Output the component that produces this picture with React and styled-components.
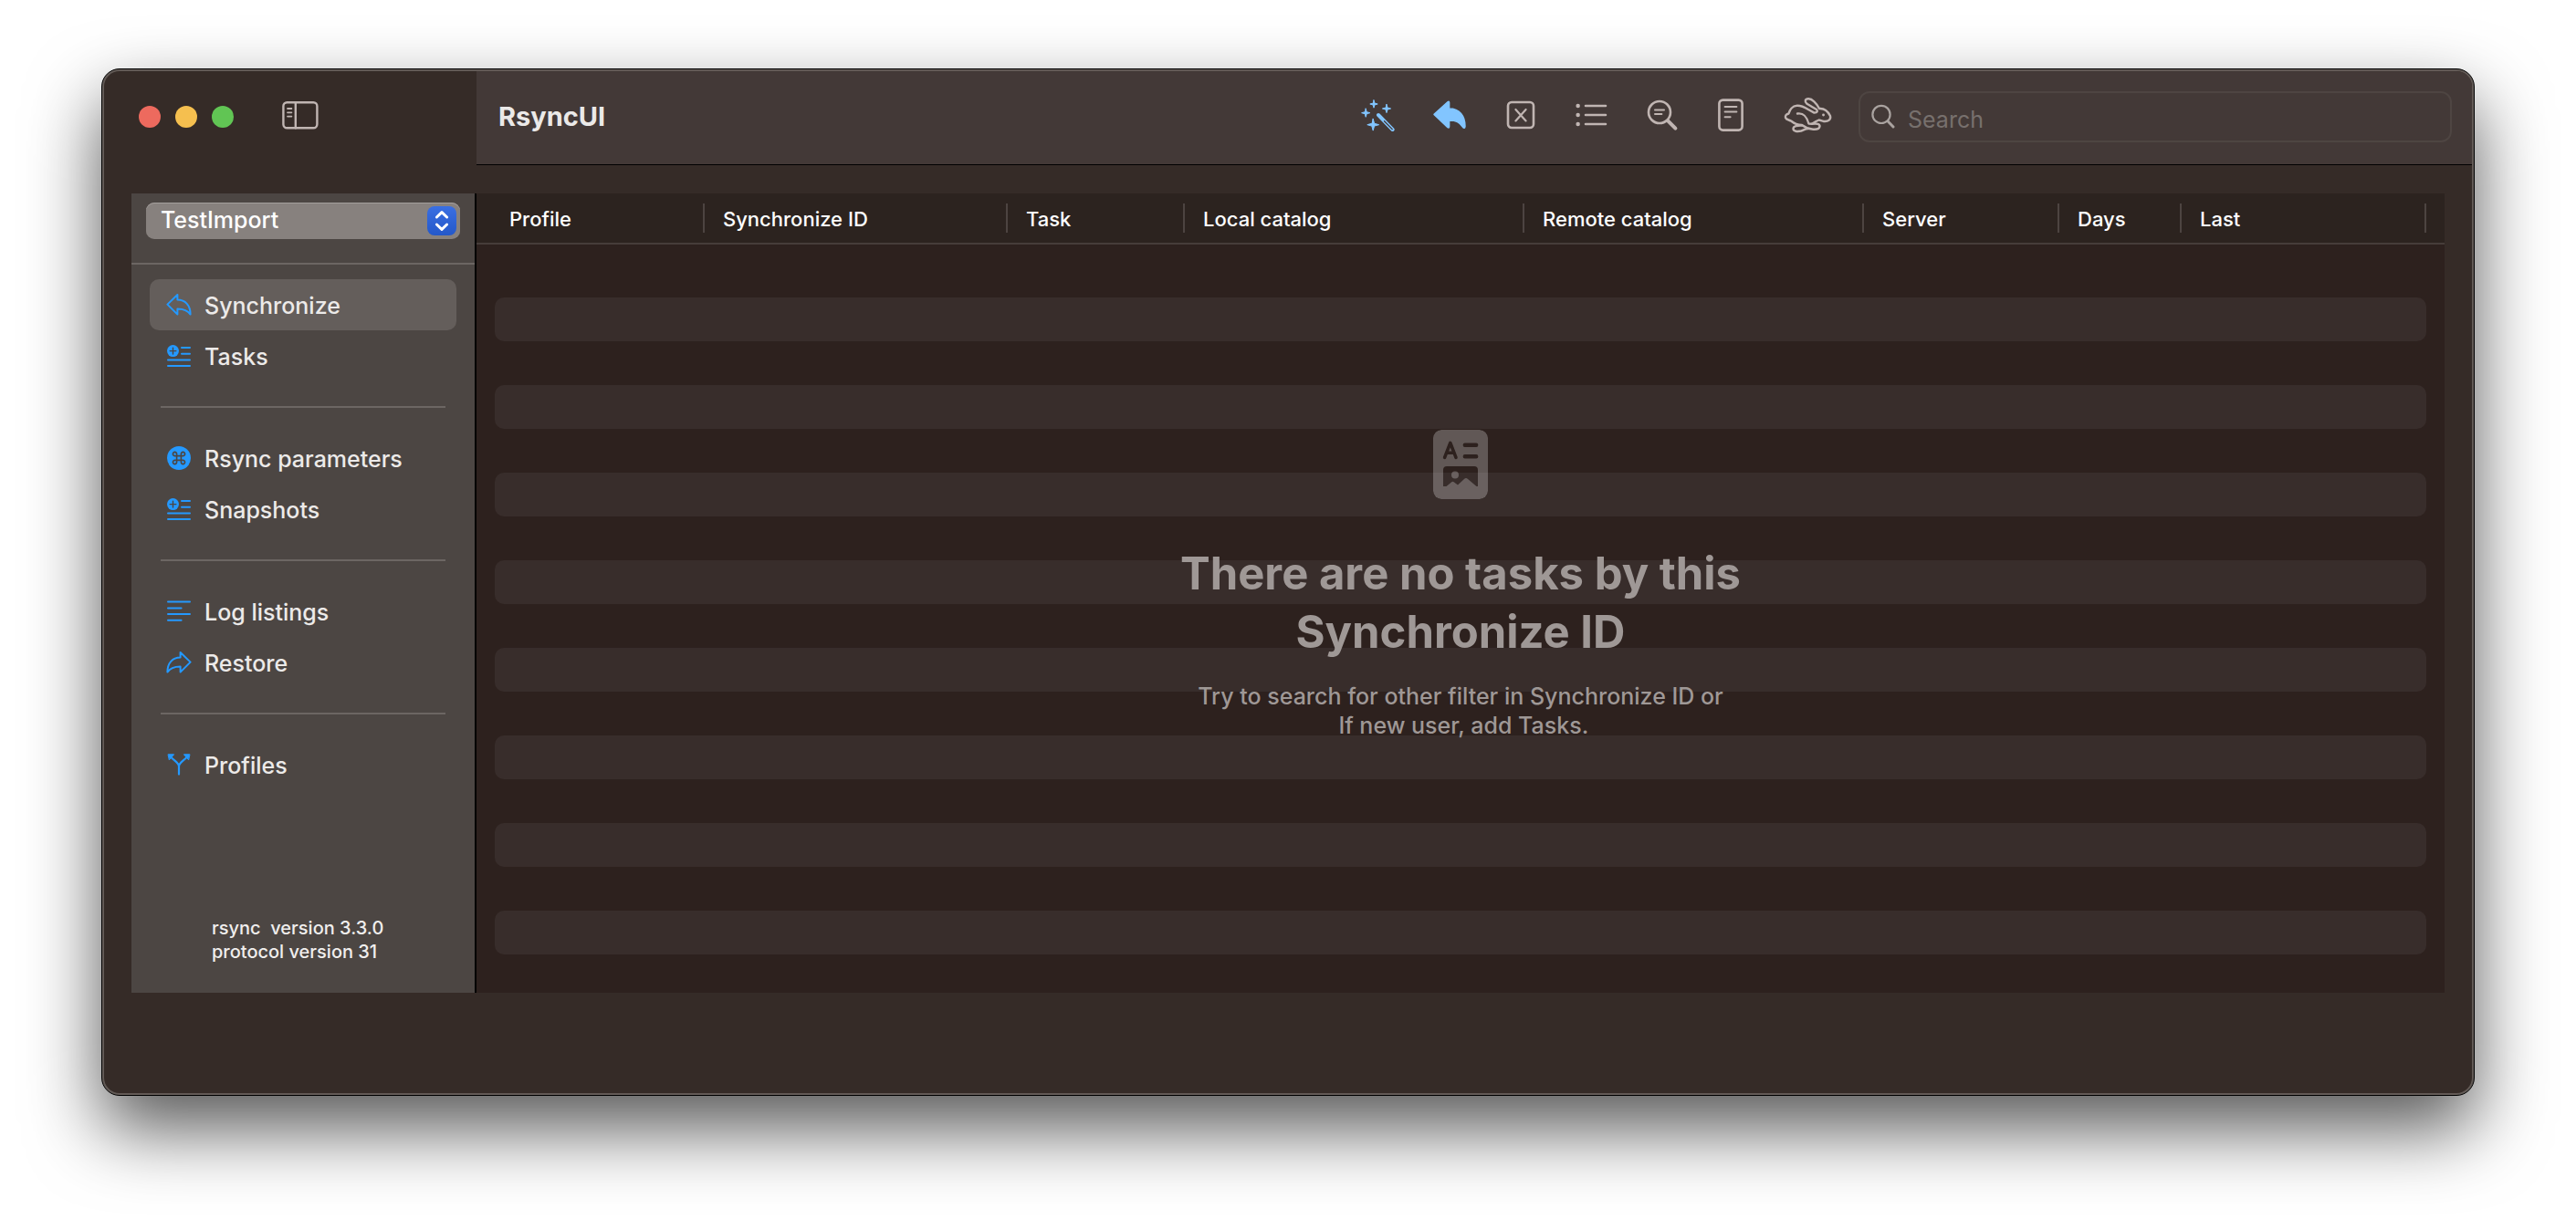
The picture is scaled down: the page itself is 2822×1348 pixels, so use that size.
import React, { useState } from "react";
import styled, { createGlobalStyle } from "styled-components";

const c = {
  window: "#352b27",
  toolbar: "#433937",
  sidebar: "#4c4643",
  tableHead: "#2c231f",
  tableBody: "#2d211e",
  stripe: "#382d2b",
  line: "#463d3a",
  sideLine: "#6c6663",
  blue: "#2499ff",
  lightBlue: "#82c5ff",
  glyph: "#c0b5b2",
};

const GlobalStyle = createGlobalStyle`
  *, *::before, *::after { box-sizing: border-box; }
  body {
    margin: 0;
    background: #fff;
    font-family: Inter, "Liberation Sans", sans-serif;
  }
`;

const Stage = styled.div`
  display: flex;
  min-height: 100vh;
  padding: 75px 111px 147px;
`;

const Window = styled.div`
  flex: 1;
  min-width: 0;
  display: flex;
  flex-direction: column;
  border: 1px solid #000;
  border-radius: 20px;
  background: #625a56;
  padding: 2px;
  box-shadow: 0 36px 80px rgba(0, 0, 0, 0.66);
`;

const WindowFill = styled.div`
  flex: 1;
  display: flex;
  flex-direction: column;
  overflow: hidden;
  border-radius: 17px;
  background: ${c.window};
`;

const TopBar = styled.header`
  display: flex;
  height: 103px;
`;

const TitleSide = styled.div`
  display: flex;
  align-items: center;
  gap: 16px;
  width: 408px;
  padding: 0 0 4px 38px;
`;

const Light = styled.button`
  width: 24px;
  height: 24px;
  padding: 0;
  border: 0;
  border-radius: 50%;
  background: ${(p) => p.$color};
`;

const IconButton = styled.button`
  display: flex;
  padding: 0;
  border: 0;
  background: none;
  color: ${(p) => p.$color || c.glyph};
  svg { overflow: visible; }
`;

const ToggleSlot = styled.div`
  padding: 0 0 4px 37px;
`;

const Toolbar = styled.div`
  flex: 1;
  display: flex;
  align-items: center;
  padding: 0 22px 2px 24px;
  border-bottom: 1px solid #000;
  background: ${c.toolbar};
`;

const Title = styled.h1`
  flex: 1;
  margin: 0;
  color: #ebe9e8;
  font-size: 29px;
  line-height: 36px;
  font-weight: 700;
`;

const Tools = styled.div`
  display: flex;
  align-items: center;
  gap: 44px;
  margin-right: 28px;
  padding-bottom: 4px;
`;

const SearchBox = styled.label`
  display: flex;
  align-items: center;
  gap: 14px;
  width: 650px;
  height: 56px;
  padding: 0 12px;
  border: 2px solid #4e4542;
  border-radius: 12px;
  color: #aaa3a0;
`;

const SearchInput = styled.input`
  flex: 1;
  min-width: 0;
  padding: 6px 0 0;
  border: 0;
  outline: 0;
  background: none;
  color: #ebe9e8;
  font: 400 25px/32px Inter, "Liberation Sans", sans-serif;
  &::placeholder { color: #77706d; opacity: 1; }
`;

const Body = styled.div`
  flex: 1;
  display: flex;
  padding: 31px 30px 110px;
`;

const Sidebar = styled.aside`
  display: flex;
  flex-direction: column;
  width: 378px;
  border-right: 2px solid #000;
  background: ${c.sidebar};
`;

const PickerRow = styled.div`
  padding: 10px 16px 26px;
  border-bottom: 2px solid ${c.sideLine};
`;

const Picker = styled.div`
  position: relative;
`;

const Select = styled.select`
  display: block;
  width: 100%;
  height: 40px;
  padding: 0 44px 2px 16px;
  appearance: none;
  border: 0;
  border-radius: 9px;
  background: #87817e;
  box-shadow: inset 0 1px 0 #a39e9b;
  color: #fff;
  font: 500 25px/32px Inter, "Liberation Sans", sans-serif;
`;

const PickerBadge = styled.span`
  position: absolute;
  top: 4px;
  right: 4px;
  display: flex;
  align-items: center;
  justify-content: center;
  width: 32px;
  height: 32px;
  border-radius: 8px;
  background: linear-gradient(#3a6fe2, #2458c9);
  color: #fff;
  pointer-events: none;
`;

const Nav = styled.nav`
  flex: 1;
  padding: 16px 20px;
`;

const NavItem = styled.a`
  display: flex;
  align-items: center;
  gap: 14px;
  height: 56px;
  padding: 0 18px;
  border-radius: 10px;
  background: ${(p) => (p.$active ? "#645e5b" : "transparent")};
  color: #eceae9;
  font-size: 25px;
  line-height: 32px;
  font-weight: 500;
  text-decoration: none;
  svg { flex: none; color: ${c.blue}; }
`;

const NavLabel = styled.span`
  padding-top: 2px;
`;

const NavDivider = styled.hr`
  height: 2px;
  margin: 27px 12px;
  border: 0;
  background: ${c.sideLine};
`;

const Version = styled.p`
  margin: 0;
  padding: 0 0 32px 88px;
  color: #f0eeed;
  font-size: 20px;
  line-height: 26px;
  font-weight: 500;
  white-space: pre-wrap;
`;

const Main = styled.main`
  position: relative;
  flex: 1;
  min-width: 0;
  overflow: hidden;
  background: ${c.tableBody};
`;

const Table = styled.table`
  width: 100%;
  table-layout: fixed;
  border-collapse: separate;
  border-spacing: 0;
  tbody::before { content: ""; display: block; height: 10px; }
`;

const Th = styled.th`
  height: 56px;
  padding: 0;
  border-bottom: 2px solid ${c.line};
  background: ${c.tableHead};
  text-align: left;
`;

const ThLabel = styled.div`
  height: 32px;
  margin-right: ${(p) => (p.$last ? 20 : 0)}px;
  padding-left: ${(p) => (p.$first ? 36 : 20)}px;
  border-right: 2px solid #4d4441;
  color: #fff;
  font-size: 22px;
  line-height: 34px;
  font-weight: 500;
  white-space: nowrap;
`;

const StripeCell = styled.td`
  padding: 0 20px;
`;

const Stripe = styled.div`
  height: 48px;
  border-radius: 10px;
  background: ${(p) => (p.$on ? c.stripe : "transparent")};
`;

const Empty = styled.div`
  position: absolute;
  inset: 0;
  display: flex;
  flex-direction: column;
  align-items: center;
  justify-content: center;
  padding-bottom: 18px;
  color: #9f9896;
  text-align: center;
`;

const EmptyTitle = styled.h2`
  margin: 50px 0 22px;
  width: 660px;
  font-size: 49px;
  line-height: 64px;
  font-weight: 700;
`;

const EmptyText = styled.p`
  margin: 0;
  font-size: 25px;
  line-height: 32px;
  font-weight: 500;
  white-space: pre-line;
`;

const Line = ({ w, h, sw = 2, children }) => (
  <svg width={w} height={h} viewBox={`0 0 ${w} ${h}`} fill="none" stroke="currentColor"
    strokeWidth={sw} strokeLinecap="round" strokeLinejoin="round" aria-hidden="true">
    {children}
  </svg>
);

const star = (x, y, r) => {
  const k = r * 0.22;
  return `M${x} ${y - r}L${x + k} ${y - k}L${x + r} ${y}L${x + k} ${y + k}L${x} ${y + r}L${x - k} ${y + k}L${x - r} ${y}L${x - k} ${y - k}Z`;
};

const SidebarIcon = () => (
  <Line w={40} h={32} sw={2.4}>
    <rect x="1.4" y="2.2" width="37" height="28" rx="4" />
    <path d="M14.8 2.2V30.2" />
    <path strokeWidth="1.8" d="M6 9H10.4M6 13.3H10.4M6 17.6H10.4" />
  </Line>
);
const Wand = () => (
  <Line w={38} h={36} sw={1}>
    <path fill="currentColor" d={star(17, 6, 4.2) + star(31, 11, 4.6) + star(8.2, 15.7, 4.6) + star(16.2, 28.7, 6.4)} />
    <path strokeWidth="4" d="M22 18L37.6 34" />
    <path stroke={c.toolbar} strokeWidth="1.3" d="M28.5 24.8L37.2 33.6" />
  </Line>
);
const ReplyFill = () => (
  <Line w={36} h={32} sw={1.5}>
    <path fill="currentColor" d="M1 15.4L16.2 1.6Q17.6 .8 17.6 2.6V9C29 9 35 17 35 28.4Q34.6 31.6 32.6 29.4C29 23.6 25 22 17.6 22V28.6Q17.6 30.6 16 29.6Z" />
  </Line>
);
const XSquare = () => (
  <Line w={32} h={32} sw={2.6}>
    <rect x="2" y="2" width="28" height="28" rx="4" />
    <path strokeWidth="2.2" d="M10.4 10L21.6 22.4M21.6 10L10.4 22.4" />
  </Line>
);
const ListIcon = () => (
  <Line w={34} h={28} sw={2.6}>
    <path d="M11 4H33M11 14H33M11 24H33" />
    <path strokeWidth="4.4" d="M2.6 4H2.7M2.6 14H2.7M2.6 24H2.7" />
  </Line>
);
const TextSearch = () => (
  <Line w={34} h={34} sw={2.6}>
    <circle cx="14" cy="14" r="12" />
    <path strokeWidth="4" d="M23.4 23.6L31.4 31.6" />
    <path strokeWidth="2" d="M9 11.6H19M9 16H16.4" />
  </Line>
);
const DocIcon = () => (
  <Line w={28} h={36} sw={2.6}>
    <rect x="1.4" y="1.6" width="25.2" height="33" rx="4" />
    <path strokeWidth="2" d="M7.6 9H20.4M7.6 14.6H20.4M7.6 20.2H13.6" />
  </Line>
);
const Hare = () => (
  <Line w={54} h={40} sw={2.4}>
    <path d="M20 31C16 31 11 29 8 26.5C6 25.5 2.8 25.3 2 23C1.5 20.6 3 19 5.5 18.5C6.5 15 9.5 10 14.5 9.8C18 9.5 22 11 27 14L33.5 17.6C37 17.4 37.5 15.6 36 14L25.5 7.8C22.5 5.2 23.5 2.5 27 2.3C31 2 36 7 39 13C45 12.5 49 17 51 21C52 24.8 49 27.5 44 27C41.5 26.5 40 25.5 38.6 25.5C36 26.5 33.5 28 31 29.8C36 29.2 39.8 29.5 39.5 32.5C39 36 35 36 31 35.5C26 35 24 34 20 31Z" />
    <path d="M15 18.5C21.5 17.5 25 21 27.4 29.5L31 29.8" />
    <path d="M20 31.6C15 31.4 10.5 32 10.5 35C10.5 38 15 38.4 19 37.5C22 36.6 23.5 35 27 35" />
    <path strokeWidth="2.8" d="M43.5 20H43.6" />
  </Line>
);
const SearchIcon = () => (
  <Line w={26} h={28} sw={2.2}>
    <circle cx="11" cy="11.4" r="9.6" />
    <path strokeWidth="3" d="M18 18.8L24 25" />
  </Line>
);
const Chevrons = () => (
  <Line w={16} h={24} sw={3}>
    <path d="M2.4 8L8 2.6L13.6 8M2.4 16L8 21.4L13.6 16" />
  </Line>
);

const ReplyLine = () => (
  <Line w={28} h={26}>
    <path d="M1.4 12.6L12.4 2V7.6C21 7.6 26.6 13.6 26.6 23.6C23.4 18.6 19 17.4 12.4 17.4V23.6Z" />
  </Line>
);
const ForwardLine = () => (
  <Line w={28} h={26}>
    <path d="M26.6 12.6L15.6 2V7.6C7 7.6 1.4 13.6 1.4 23.6C4.6 18.6 9 17.4 15.6 17.4V23.6Z" />
  </Line>
);
const AddList = () => (
  <Line w={28} h={26} sw={2}>
    <circle cx="7.5" cy="7.6" r="6.5" fill="currentColor" stroke="none" />
    <path stroke={c.sidebar} strokeWidth="1.4" d="M7.5 4.2V11M4.1 7.6H10.9" />
    <path d="M17 4H26M17 10.8H26M2 17.4H26M2 24H26" />
  </Line>
);
const CommandDot = () => (
  <Line w={28} h={26} sw={1.6}>
    <circle cx="14" cy="13" r="13" fill="currentColor" stroke="none" />
    <path stroke={c.sidebar} d="M11.6 10.6H16.4V15.4H11.6ZM11.6 10.6H9.8A2.1 2.1 0 1 1 11.6 8.7ZM16.4 10.6V8.7A2.1 2.1 0 1 1 18.2 10.6ZM16.4 15.4H18.2A2.1 2.1 0 1 1 16.4 17.3ZM11.6 15.4V17.3A2.1 2.1 0 1 1 9.8 15.4Z" />
  </Line>
);
const TextLines = () => (
  <Line w={28} h={26}>
    <path d="M2 2.6H26M2 9.4H16.6M2 16H26M2 22.8H16.6" />
  </Line>
);
const Branch = () => (
  <Line w={28} h={26} sw={2.2}>
    <path d="M14 23.6V15C14 10.6 9 9 5 4.6M14 15C14 10.6 19 9 23 4.6" />
    <path strokeWidth="1" fill="currentColor" d="M2.4 1.8H8.6L3.6 7.6ZM25.6 1.8H19.4L24.4 7.6Z" />
  </Line>
);
const EmptyIcon = () => (
  <svg width="60" height="76" viewBox="0 0 60 76" fill="none" strokeLinecap="round" strokeLinejoin="round" aria-hidden="true">
    <mask id="card">
      <rect width="60" height="76" rx="9" fill="#fff" />
      <path stroke="#000" strokeWidth="3.6" d="M12.6 30.4L18.8 14.4L25 30.4M15 25.2H22.6" />
      <path stroke="#000" strokeWidth="4.4" d="M34.8 16.8H47.2M34.8 29.2H47.2" />
      <path fill="#000" d="M11 44Q11 40 15 40H45Q49 40 49 44V62H47.5L38 54Q36 52 34 54L27 60.5L23 57.5Q21.4 56 20 57.5L14.5 62H11Z" />
      <circle cx="24" cy="49.6" r="4" fill="#fff" />
    </mask>
    <rect width="60" height="76" rx="9" fill="rgba(255,255,255,.25)" mask="url(#card)" />
  </svg>
);

const tools = [
  ["Estimate", Wand, c.lightBlue],
  ["Synchronize", ReplyFill, c.lightBlue],
  ["Reset", XSquare],
  ["List tasks", ListIcon],
  ["Estimate details", TextSearch],
  ["Output", DocIcon],
  ["Quick synchronize", Hare],
];

const groups = [
  [["Synchronize", ReplyLine], ["Tasks", AddList]],
  [["Rsync parameters", CommandDot], ["Snapshots", AddList]],
  [["Log listings", TextLines], ["Restore", ForwardLine]],
  [["Profiles", Branch]],
];

const columns = [
  ["Profile", 250],
  ["Synchronize ID", 332],
  ["Task", 194],
  ["Local catalog", 372],
  ["Remote catalog", 372],
  ["Server", 214],
  ["Days", 134],
  ["Last"],
];

const ROWS = 16;

export default function App() {
  const [active, setActive] = useState("Synchronize");
  return (
    <>
      <GlobalStyle />
      <Stage>
        <Window>
          <WindowFill>
            <TopBar>
              <TitleSide>
                <Light $color="#ed6a5e" aria-label="Close" />
                <Light $color="#f5bf4f" aria-label="Minimize" />
                <Light $color="#61c554" aria-label="Zoom" />
                <ToggleSlot>
                  <IconButton aria-label="Toggle sidebar"><SidebarIcon /></IconButton>
                </ToggleSlot>
              </TitleSide>
              <Toolbar>
                <Title>RsyncUI</Title>
                <Tools>
                  {tools.map(([label, Icon, color]) => (
                    <IconButton key={label} aria-label={label} $color={color}><Icon /></IconButton>
                  ))}
                </Tools>
                <SearchBox>
                  <SearchIcon />
                  <SearchInput type="text" placeholder="Search" aria-label="Search" />
                </SearchBox>
              </Toolbar>
            </TopBar>
            <Body>
              <Sidebar>
                <PickerRow>
                  <Picker>
                    <Select aria-label="Profile" defaultValue="TestImport">
                      <option>TestImport</option>
                    </Select>
                    <PickerBadge><Chevrons /></PickerBadge>
                  </Picker>
                </PickerRow>
                <Nav>
                  {groups.map((items, i) => (
                    <React.Fragment key={i}>
                      {i > 0 && <NavDivider />}
                      {items.map(([label, Icon]) => (
                        <NavItem key={label} href="#" $active={label === active} onClick={() => setActive(label)}>
                          <Icon />
                          <NavLabel>{label}</NavLabel>
                        </NavItem>
                      ))}
                    </React.Fragment>
                  ))}
                </Nav>
                <Version>{"rsync  version 3.3.0\nprotocol version 31"}</Version>
              </Sidebar>
              <Main>
                <Table>
                  <colgroup>
                    {columns.map(([name, width]) => <col key={name} width={width} />)}
                  </colgroup>
                  <thead>
                    <tr>
                      {columns.map(([name], i) => (
                        <Th key={name} scope="col">
                          <ThLabel $first={i === 0} $last={i === columns.length - 1}>{name}</ThLabel>
                        </Th>
                      ))}
                    </tr>
                  </thead>
                  <tbody>
                    {Array.from({ length: ROWS }, (_, i) => (
                      <tr key={i}>
                        <StripeCell colSpan={columns.length}><Stripe $on={i % 2 === 1} /></StripeCell>
                      </tr>
                    ))}
                  </tbody>
                </Table>
                <Empty>
                  <EmptyIcon />
                  <EmptyTitle>There are no tasks by this Synchronize ID</EmptyTitle>
                  <EmptyText>{"Try to search for other filter in Synchronize ID or\n\u00a0If new user, add Tasks."}</EmptyText>
                </Empty>
              </Main>
            </Body>
          </WindowFill>
        </Window>
      </Stage>
    </>
  );
}
